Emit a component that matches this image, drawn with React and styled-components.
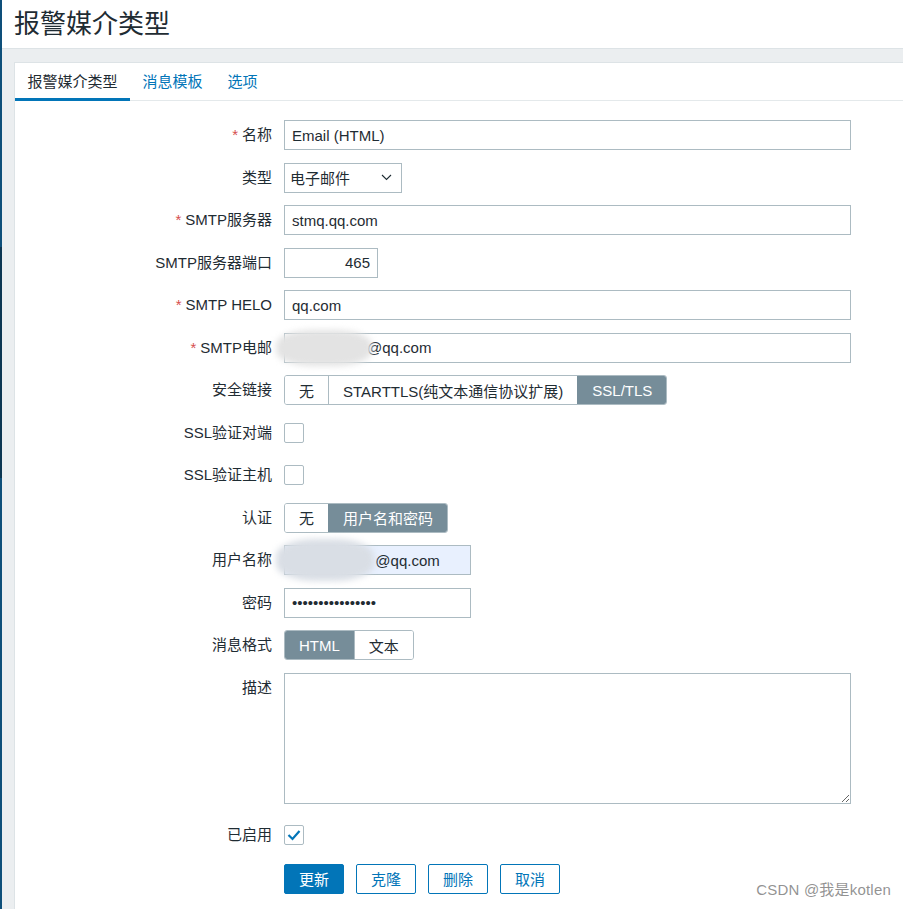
import styled, { createGlobalStyle } from 'styled-components';

const GlobalStyle = createGlobalStyle`
    html, body {
        margin: 0;
        padding: 0;
        background: #ebeef0;
        overflow: hidden;
    }
    * {
        box-sizing: border-box;
    }
    body {
        font-family: "Liberation Sans", "Noto Sans CJK SC", sans-serif;
        font-size: 15px;
        color: #1f2c33;
    }
`;

// 整頁：左側窄邊欄 + 主內容
const Page = styled.div`
    display: grid;
    grid-template-columns: 2px 1fr;
    height: 909px;
    position: relative;
`;

const SideStrip = styled.div`
    background: linear-gradient(
        to bottom,
        #0e4f7a 0,
        #0e4f7a 247px,
        #0c3652 247px,
        #0c3652 478px,
        #0e4f7a 478px
    );
`;

const Main = styled.main`
    display: flex;
    flex-direction: column;
    min-width: 0;
`;

const Header = styled.header`
    height: 49px;
    background: #fff;
    border-bottom: 1px solid #dde3e6;
    display: flex;
    align-items: center;
    padding: 0 0 5px 12px;
`;

const Title = styled.h1`
    margin: 0;
    font-size: 26px;
    font-weight: normal;
    color: #1f2c33;
`;

const Content = styled.div`
    flex: 1;
    padding: 13px 0 0 12px;
`;

const Panel = styled.section`
    height: 100%;
    background: #fff;
    border-left: 1px solid #dde3e6;
    border-top: 1px solid #dde3e6;
`;

const Tabs = styled.nav`
    display: flex;
    height: 38px;
    border-bottom: 1px solid #e4e9eb;
`;

const Tab = styled.a`
    display: flex;
    align-items: center;
    padding: 0 12.5px 1px;
    font-size: 15px;
    color: ${(props) => (props.active ? '#1f2c33' : '#0275b8')};
    border-bottom: 3px solid ${(props) => (props.active ? '#0275b8' : 'transparent')};
    margin-bottom: -1px;
    cursor: pointer;
`;

const Form = styled.div`
    display: grid;
    grid-template-columns: 257px 567px;
    column-gap: 12px;
    row-gap: 12.5px;
    padding-top: 19px;
`;

const Label = styled.label`
    text-align: right;
    line-height: 30px;
    white-space: nowrap;
    margin-top: ${(props) => props.offset || 0}px;
`;

const Required = styled.span`
    color: #d64e4e;
    margin-right: 4px;
`;

const Cell = styled.div`
    display: flex;
    align-items: center;
    min-height: 30px;
    position: relative;
    margin-top: ${(props) => props.offset || 0}px;
`;

const Input = styled.input`
    height: 30px;
    width: ${(props) => props.width || '100%'};
    border: 1px solid #acbbc2;
    background: ${(props) => (props.autofill ? '#e8f0fe' : '#fff')};
    padding: 0 7px;
    font: inherit;
    color: #1f2c33;
    text-align: ${(props) => (props.right ? 'right' : 'left')};
    outline: none;
`;

const SelectBox = styled.div`
    height: 30px;
    width: 118px;
    border: 1px solid #acbbc2;
    display: flex;
    align-items: center;
    justify-content: space-between;
    padding: 0 9px 0 5px;
`;

const Segments = styled.div`
    display: flex;
    height: 30px;
    border: 1px solid #acbbc2;
    border-radius: 3px;
    overflow: hidden;
`;

const Segment = styled.span`
    display: flex;
    align-items: center;
    padding: 0 14px;
    background: ${(props) => (props.active ? '#768d99' : '#fff')};
    color: ${(props) => (props.active ? '#fff' : '#1f2c33')};
    border-left: 1px solid ${(props) => (props.active ? '#768d99' : '#acbbc2')};
    &:first-child {
        border-left: none;
    }
`;

const CheckBox = styled.span`
    width: 20px;
    height: 20px;
    border: 1px solid #acbbc2;
    border-radius: 2px;
    display: flex;
    align-items: center;
    justify-content: center;
    background: #fff;
`;

const TextArea = styled.textarea`
    width: 100%;
    height: 131px;
    border: 1px solid #acbbc2;
    font: inherit;
    resize: both;
    outline: none;
`;

const Buttons = styled.div`
    display: flex;
    gap: 12px;
`;

const Button = styled.button`
    height: 30px;
    padding: 0 14px;
    font: inherit;
    border-radius: 2px;
    border: 1px solid #0275b8;
    background: ${(props) => (props.primary ? '#0275b8' : '#fff')};
    color: ${(props) => (props.primary ? '#fff' : '#0275b8')};
    cursor: pointer;
`;

// 打碼遮擋區塊
const Redact = styled.span`
    position: absolute;
    left: -8px;
    top: ${(props) => props.top || -3}px;
    width: ${(props) => props.w || 96}px;
    height: ${(props) => props.h || 36}px;
    border-radius: 40%;
    background: ${(props) => props.color || '#e3e3e3'};
    filter: blur(3px);
`;

const Watermark = styled.div`
    position: absolute;
    right: 12px;
    bottom: 10px;
    font-size: 15px;
    color: rgba(110, 110, 110, 0.75);
    letter-spacing: 0.2px;
`;

const Chevron = () => (
    <svg width='11' height='7' viewBox='0 0 11 7'>
        <polyline points='1,1 5.5,5.5 10,1' fill='none' stroke='#1f2c33' strokeWidth='1.1' />
    </svg>
);

const Check = () => (
    <svg width='14' height='12' viewBox='0 0 14 12'>
        <polyline points='1.5,6 5.5,10 12.5,2' fill='none' stroke='#0275b8' strokeWidth='2.2' />
    </svg>
);

const Req = ({ children }) => (
    <>
        <Required>*</Required>
        {children}
    </>
);

export default function App() {
    return (
        <>
            <GlobalStyle />
            <Page>
                <SideStrip />
                <Main>
                    <Header>
                        <Title>报警媒介类型</Title>
                    </Header>
                    <Content>
                        <Panel>
                            <Tabs>
                                <Tab active>报警媒介类型</Tab>
                                <Tab>消息模板</Tab>
                                <Tab>选项</Tab>
                            </Tabs>
                            <Form>
                                <Label><Req>名称</Req></Label>
                                <Cell><Input readOnly defaultValue='Email (HTML)' /></Cell>

                                <Label>类型</Label>
                                <Cell>
                                    <SelectBox>
                                        <span>电子邮件</span>
                                        <Chevron />
                                    </SelectBox>
                                </Cell>

                                <Label><Req>SMTP服务器</Req></Label>
                                <Cell><Input readOnly defaultValue='stmq.qq.com' /></Cell>

                                <Label>SMTP服务器端口</Label>
                                <Cell><Input readOnly right width='94px' defaultValue='465' /></Cell>

                                <Label><Req>SMTP HELO</Req></Label>
                                <Cell><Input readOnly defaultValue='qq.com' /></Cell>

                                <Label><Req>SMTP电邮</Req></Label>
                                <Cell>
                                    <Input readOnly defaultValue={'\u00a0'.repeat(18) + '@qq.com'} />
                                    <Redact />
                                </Cell>

                                <Label>安全链接</Label>
                                <Cell>
                                    <Segments>
                                        <Segment>无</Segment>
                                        <Segment>STARTTLS(纯文本通信协议扩展)</Segment>
                                        <Segment active>SSL/TLS</Segment>
                                    </Segments>
                                </Cell>

                                <Label>SSL验证对端</Label>
                                <Cell><CheckBox /></Cell>

                                <Label>SSL验证主机</Label>
                                <Cell><CheckBox /></Cell>

                                <Label>认证</Label>
                                <Cell>
                                    <Segments>
                                        <Segment>无</Segment>
                                        <Segment active>用户名和密码</Segment>
                                    </Segments>
                                </Cell>

                                <Label>用户名称</Label>
                                <Cell>
                                    <Input readOnly autofill width='187px' defaultValue={'\u00a0'.repeat(20) + '@qq.com'} />
                                    <Redact top={-6} h={42} w={98} color='#d9dee5' />
                                </Cell>

                                <Label>密码</Label>
                                <Cell><Input readOnly width='187px' defaultValue={'•'.repeat(16)} /></Cell>

                                <Label>消息格式</Label>
                                <Cell>
                                    <Segments>
                                        <Segment active>HTML</Segment>
                                        <Segment>文本</Segment>
                                    </Segments>
                                </Cell>

                                <Label>描述</Label>
                                <Cell><TextArea /></Cell>

                                <Label offset={3.5}>已启用</Label>
                                <Cell offset={3.5}>
                                    <CheckBox><Check /></CheckBox>
                                </Cell>

                                <span />
                                <Cell offset={1.5}>
                                    <Buttons>
                                        <Button primary>更新</Button>
                                        <Button>克隆</Button>
                                        <Button>删除</Button>
                                        <Button>取消</Button>
                                    </Buttons>
                                </Cell>
                            </Form>
                        </Panel>
                    </Content>
                </Main>
                <Watermark>CSDN @我是kotlen</Watermark>
            </Page>
        </>
    );
}
